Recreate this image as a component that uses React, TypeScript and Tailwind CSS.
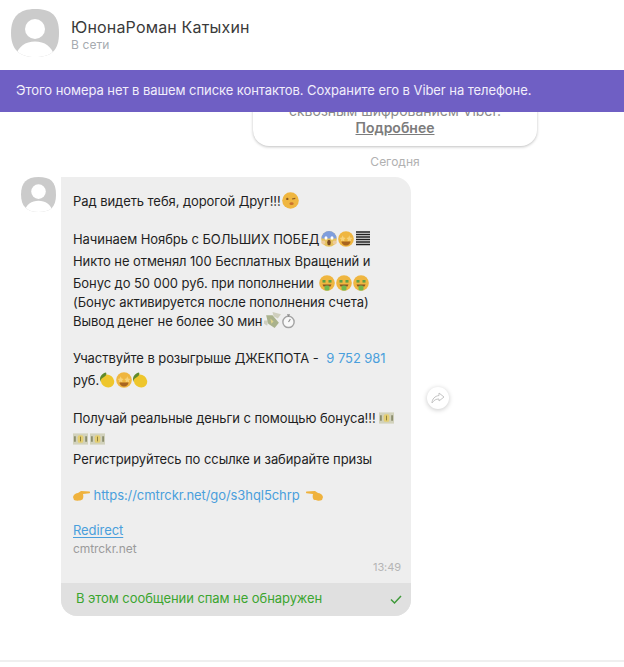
const Avatar = ({ className }: { className: string }) => (
  <svg viewBox="0 0 48 48" className={className}>
    <defs>
      <clipPath id="sq">
        <path d="M24 0C40 0 48 6 48 24S40 48 24 48 0 40 0 24 8 0 24 0Z" />
      </clipPath>
    </defs>
    <g clipPath="url(#sq)">
      <rect width="48" height="48" fill="#cbcbcb" />
      <circle cx="24" cy="20" r="10" fill="#fff" />
      <path d="M4 50C6 38 14 32.500 24 32.500S42 38 44 50Z" fill="#fff" />
    </g>
  </svg>
);

const Face = ({ children }: { children?: React.ReactNode }) => (
  <svg viewBox="0 0 16 16" className="ml-px inline-block h-4 w-4 align-[-3px]">
    <circle cx="8" cy="8" r="7.800" fill="#efb640" />
    {children}
  </svg>
);

const Wink = () => (
  <svg viewBox="0 0 16 16" className="-ml-[2px] inline-block h-[17px] w-[17px] align-[-3px]">
    <circle cx="8" cy="8" r="7.800" fill="#efb640" />
    <circle cx="5" cy="6.500" r="1.100" fill="#8a5a22" />
    <path d="M9.500 6.500l3-.5" stroke="#8a5a22" fill="none" />
    <ellipse cx="9" cy="11" rx="2" ry="1.300" fill="#c9722e" />
  </svg>
);

const Scream = () => (
  <svg viewBox="0 0 16 16" className="-ml-[2px] inline-block h-4 w-4 align-[-3px]">
    <circle cx="8" cy="8" r="7.800" fill="#e6c25e" />
    <path d="M.5 7.500a7.500 7.500 0 0 1 15 0Z" fill="#7f9edd" />
    <ellipse cx="5" cy="7" rx="1.500" ry="1.700" fill="#fff" />
    <ellipse cx="11" cy="7" rx="1.500" ry="1.700" fill="#fff" />
    <ellipse cx="8" cy="11.500" rx="1.800" ry="2.800" fill="#7a4a22" />
    <circle cx="2.300" cy="11.500" r="2" fill="#eecb9a" />
    <circle cx="13.700" cy="11.500" r="2" fill="#eecb9a" />
  </svg>
);

const StarFace = () => (
  <Face>
    <path d="M1.500 7l2.300-.5.900-2.200.9 2.200 2 .5-1.500 1.400.4 2-1.800-1-1.800 1 .4-2Z" fill="#f6d27a" />
    <path d="M8.400 7l2-.5.900-2.200.9 2.200 2.300.5-1.700 1.400.4 2-1.900-1-1.800 1 .4-2Z" fill="#f6d27a" />
    <path d="M3.500 10.500h9c0 2.300-2 4-4.500 4s-4.500-1.700-4.500-4Z" fill="#a8641f" />
  </Face>
);

const Money = () => (
  <Face>
    <rect x="3.500" y="5" width="3" height="2.600" fill="#5fa044" />
    <rect x="9.500" y="5" width="3" height="2.600" fill="#5fa044" />
    <path d="M3.500 9.500h9l-1 2h-7Z" fill="#8a5522" />
    <rect x="5.500" y="10.500" width="5" height="5" rx="1.500" fill="#72b84f" />
  </Face>
);

const Bars = () => (
  <svg viewBox="0 0 14 16" className="ml-[2px] inline-block h-4 w-[14px] align-[-3px]">
    <path d="M0 1h14M0 3.500h14M0 6h14M0 8.500h14M0 11h14M0 13.500h14" stroke="#222" strokeWidth="1.500" />
  </svg>
);

const Lemon = () => (
  <svg viewBox="0 0 16 16" className="inline-block h-4 w-4 align-[-3px]">
    <ellipse cx="8.500" cy="9" rx="7" ry="6.300" fill="#eec62c" transform="rotate(40 8.500 9)" />
    <path d="M1 7c0-3 3-6 6-6.500C8 2 7 4 5 5 3.500 5.800 2 6.500 1 10Z" fill="#5f8a2c" />
  </svg>
);

const Bill = () => (
  <svg viewBox="0 0 16 12" className="mr-[2px] inline-block h-3 w-[15px] align-[-1px]">
    <rect width="16" height="12" fill="#d2d2bc" />
    <rect x="5" y="2" width="6" height="8" rx="2" fill="#e5cf72" />
    <path d="M2 3v6M14 3v6" stroke="#8b8d6e" strokeWidth="2" />
    <path d="M8 3.500v5" stroke="#8a7c3a" />
  </svg>
);

const WingedMoney = () => (
  <svg viewBox="0 0 16 16" className="-ml-[2px] inline-block h-[17px] w-[17px] align-[-3px]">
    <path d="M8 0l8 2-3 4-4-2ZM0 8l4 0-1 5-3-2Z" fill="#cfcfbe" />
    <path d="M2 3l6 0 6 7-4 5-6-4Z" fill="#aab28c" />
    <path d="M6 6l3 3-2 2Z" fill="#e0d48e" />
  </svg>
);

const Stopwatch = () => (
  <svg viewBox="0 0 16 16" className="inline-block h-4 w-[15px] align-[-3px]">
    <circle cx="8" cy="9" r="6" fill="#f8f8f8" stroke="#a3a3a3" strokeWidth="1.500" />
    <path d="M6.500 1.500h3M8 1.500v2M8 9l2-3" stroke="#8f8f8f" strokeWidth="1.200" fill="none" />
  </svg>
);

const PointRight = () => (
  <svg viewBox="0 0 17 10" className="inline-block h-[10px] w-[17px] align-[-1px]">
    <path d="M0 6c1-3 3-4 5-4l3-2 8.500.5c.7.500.7 1.500 0 1.800L10 3c.5 2 .5 4-.5 5.500C7 10 3 10 1 9Z" fill="#efb23d" />
  </svg>
);

const PointLeft = () => (
  <svg viewBox="0 0 17 10" className="ml-[3px] inline-block h-[10px] w-[17px] align-[-1px]">
    <path d="M17 6c-1-3-3-4-5-4L9 0 .5.500c-.7.500-.7 1.500 0 1.800L7 3c-.5 2-.5 4 .5 5.500C10 10 14 10 16 9Z" fill="#efb23d" />
  </svg>
);

export default function App() {
  return (
    <div className="flex h-[667px] w-[624px] flex-col overflow-hidden bg-white font-['Inter',sans-serif] text-[13px] text-[#1f1f1f]">
      <header className="flex h-[70px] shrink-0 items-start pl-[11px] pt-[9px]">
        <Avatar className="h-12 w-12" />
        <div className="ml-[12px] pt-[8px]">
          <div className="text-[16px] leading-[20px] tracking-[0.17px] text-[#3a3a3a]">ЮнонаРоман Катыхин</div>
          <div className="text-[12px] leading-[16px] tracking-[0.1px] text-[#a6abb0]">В сети</div>
        </div>
      </header>

      <div className="relative z-10 flex h-[42px] shrink-0 items-center bg-[#6f5fc4] pl-4 text-[13px] tracking-[-0.065px] text-[#f1eefb]">
        Этого номера нет в вашем списке контактов. Сохраните его в Viber на телефоне.
      </div>

      <main className="flex-1">
        <div className="ml-[253px] mt-[-20px] flex h-[54px] w-[284px] flex-col items-center justify-end rounded-b-[16px] bg-white pb-[9px] shadow-[0_1px_3px_rgba(0,0,0,0.25)]">
          <div className="text-[14px] leading-[16px] text-[#8a8a8a]">сквозным шифрованием Viber.</div>
          <div className="text-[14px] font-semibold leading-[18px] text-[#7c7c7c] underline">Подробнее</div>
        </div>

        <div className="ml-[253px] mt-[8px] w-[284px] text-center text-[12px] leading-[16px] text-[#b1b1b1]">Сегодня</div>

        <div className="mt-[7px] flex items-start pl-[21px]">
          <Avatar className="h-[35px] w-[35px]" />
          <div className="ml-[5px] w-[350px] overflow-hidden rounded-[16px] rounded-tl-none bg-[#eeeeee] tracking-[-0.07px]">
            <div className="px-[12px] pt-[13px]">
              <div className="h-[22px] leading-[22px]">Рад видеть тебя, дорогой Друг!!! <Wink /></div>
              <div className="mt-[16px] h-[22px] leading-[22px]">Начинаем Ноябрь с БОЛЬШИХ ПОБЕД <Scream /><StarFace /><Bars /></div>
              <div className="h-[22px] leading-[22px]">Никто не отменял 100 Бесплатных Вращений и</div>
              <div className="h-[21px] leading-[22px]">Бонус до 50 000 руб. при пополнении <Money /><Money /><Money /></div>
              <div className="h-[19px] leading-[19px]">(Бонус активируется после пополнения счета)</div>
              <div className="h-[19px] leading-[19px]">Вывод денег не более 30 мин <WingedMoney /><Stopwatch /></div>
              <div className="mt-[16px] h-[22px] leading-[22px]">Участвуйте в розыгрыше ДЖЕКПОТА -  <span className="ml-1 text-[#4a9fdc]">9 752 981</span></div>
              <div className="h-[22px] leading-[22px]">руб.<Lemon /><StarFace /><Lemon /></div>
              <div className="mt-[16px] h-[22px] leading-[22px]">Получай реальные деньги с помощью бонуса!!! <Bill /></div>
              <div className="h-[20px] leading-[20px]"><Bill /><Bill /></div>
              <div className="h-[20px] leading-[20px]">Регистрируйтесь по ссылке и забирайте призы</div>
              <div className="mt-[15px] h-[22px] leading-[22px]"><PointRight /> <span className="text-[#4a9fdc]">https://cmtrckr.net/go/s3hql5chrp</span> <PointLeft /></div>
              <div className="mt-[15px] h-[19px] leading-[18px]"><span className="text-[#4a9fdc] underline underline-offset-2">Redirect</span></div>
              <div className="h-[18px] text-[12px] leading-[18px] text-[#9b9b9b]">cmtrckr.net</div>
              <div className="-mr-[2px] h-[18px] text-right text-[11px] leading-[18px] text-[#b5b5b5]">13:49</div>
            </div>
            <div className="mt-[7px] flex h-[33px] items-center justify-between bg-[#e0e0e0] pb-px pl-[15px] pr-[9px] text-[#3ba52f]">
              <span>В этом сообщении спам не обнаружен</span>
              <svg viewBox="0 0 12 12" className="h-3 w-3 fill-none stroke-[#3f9a3a] stroke-[1.500]"><path d="M1 6.500 4.500 10 11 3" /></svg>
            </div>
          </div>
          <div className="ml-[16px] mt-[210px] flex h-[22px] w-[22px] shrink-0 items-center justify-center rounded-full bg-white shadow-[0_1px_5px_rgba(0,0,0,0.22)]">
            <svg viewBox="0 0 14 12" className="h-3 w-[14px] fill-none stroke-[#c4c4c4]"><path d="M8 1l5 4-5 4V7C5 7 3 8 1 11c0-4 3-7 7-7.500Z" /></svg>
          </div>
        </div>
      </main>

      <div className="mb-[5px] h-[2px] shrink-0 bg-[#efefef]" />
    </div>
  );
}
